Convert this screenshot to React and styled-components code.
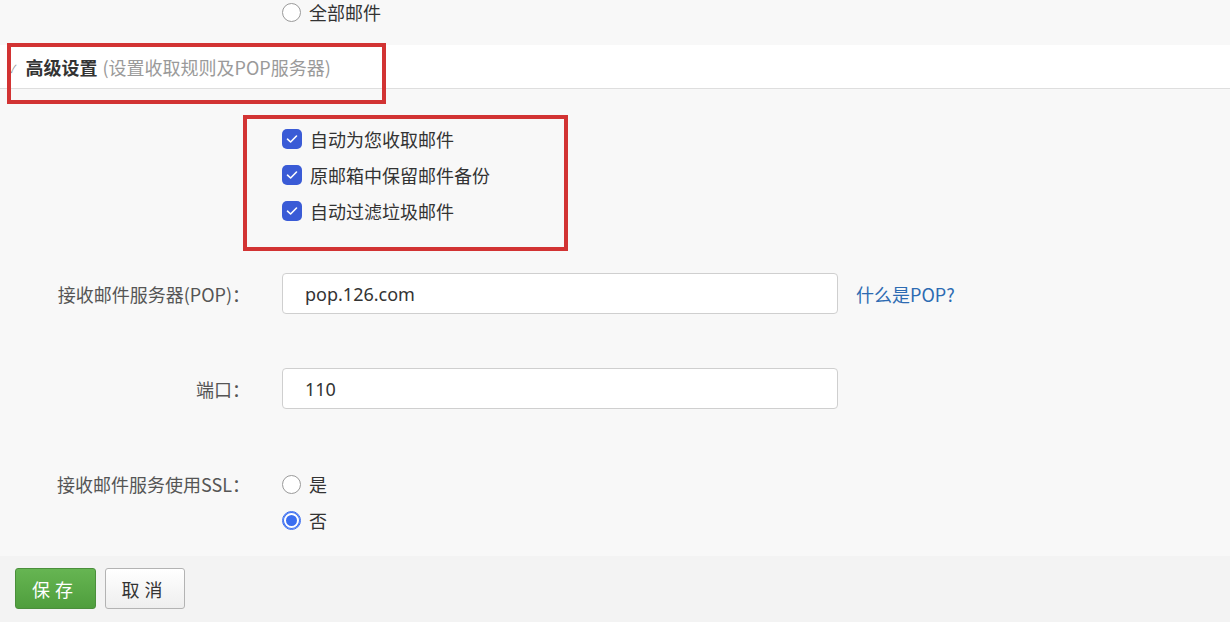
import React from 'react'
import styled, {createGlobalStyle} from 'styled-components'

const GlobalStyle = createGlobalStyle`
    body {
        margin: 0;
        background: #f8f8f8;
        font-family: "Noto Sans CJK SC", "Noto Sans", sans-serif;
        color: #333;
    }
`
const Page = styled.div`
    width: 1230px;
    height: 622px;
    overflow: hidden;
    display: flex;
    flex-direction: column;
`
const TopRow = styled.div`
    height: 24px;
    padding-left: 282px;
    display: flex;
    align-items: center;
`
const Header = styled.div`
    position: relative;
    margin-top: 21px;
    height: 43px;
    background: #fff;
    border-bottom: 1px solid #dedede;
    display: flex;
    align-items: center;
    padding-left: 9px;
`
const Caret = styled.span`
    font-size: 11px;
    color: #999;
    margin-right: 9px;
    margin-top: 2px;
`
const Title = styled.span`
    font-size: 18px;
    font-weight: bold;
    color: #333;
`
const Sub = styled.span`
    font-size: 18px;
    color: #9a9a9a;
    margin-left: 5px;
`
const Mark = styled.div`
    position: absolute;
    left: ${p => p.$left}px;
    top: ${p => p.$top}px;
    width: ${p => p.$w}px;
    height: ${p => p.$h}px;
    border: 4px solid #d23333;
    box-sizing: border-box;
    pointer-events: none;
`
const Checks = styled.div`
    position: relative;
    margin: 32px 0 0 282px;
    display: flex;
    flex-direction: column;
`
const CheckRow = styled.label`
    height: 36px;
    display: flex;
    align-items: center;
    gap: 8px;
    font-size: 18px;
    color: #333;
`
const Box = styled.span`
    width: 20px;
    height: 20px;
    border-radius: 5px;
    background: #3a5bd6;
    display: flex;
    align-items: center;
    justify-content: center;
`
const Field = styled.div`
    display: grid;
    grid-template-columns: 250px 556px auto;
    column-gap: 32px;
    align-items: ${p => (p.$top ? 'start' : 'center')};
    margin-top: ${p => p.$mt}px;
`
const Label = styled.div`
    text-align: right;
    font-size: 18px;
    color: #555;
    line-height: 36px;
`
const Input = styled.input`
    box-sizing: border-box;
    width: 556px;
    height: 41px;
    border: 1px solid #cfcfcf;
    border-radius: 4px;
    background: #fff;
    padding: 0 22px;
    font-family: "Noto Sans", "Noto Sans CJK SC", sans-serif;
    font-size: 18px;
    color: #333;
    outline: none;
`
const Help = styled.a`
    font-size: 18px;
    color: #2d6bb2;
    text-decoration: none;
    margin-left: -14px;
`
const Radios = styled.div`
    display: flex;
    flex-direction: column;
`
const RadioRow = styled.label`
    height: ${p => p.$h || 36}px;
    display: flex;
    align-items: center;
    gap: 8px;
    font-size: 18px;
    line-height: 24px;
    color: #333;
`
const Dot = styled.span`
    box-sizing: border-box;
    width: 19px;
    height: 19px;
    border-radius: 50%;
    background: #fff;
    border: 1px solid ${p => (p.$on ? '#3b6ef0' : '#9a9a9a')};
    box-shadow: ${p => (p.$on ? 'inset 0 0 0 1px #3b6ef0, inset 0 0 0 3px #fff, inset 0 0 0 10px #3b6ef0' : 'none')};
`
const Footer = styled.div`
    margin-top: 18px;
    flex: 1;
    background: #f3f3f3;
    display: flex;
    gap: 9px;
    padding: 12px 0 0 15px;
`
const Button = styled.button`
    width: ${p => p.$w}px;
    height: 41px;
    border-radius: 3px;
    font-family: "Noto Sans CJK SC", sans-serif;
    font-size: 18px;
    letter-spacing: 5px;
    padding-left: 5px;
    cursor: pointer;
    color: ${p => (p.$primary ? '#fff' : '#333')};
    border: 1px solid ${p => (p.$primary ? '#4a8f3b' : '#b3b3b3')};
    background: ${p => (p.$primary ? 'linear-gradient(#66b552, #4f9e3d)' : 'linear-gradient(#ffffff, #eeeeee)')};
`

const CheckIcon = () => (
    <Box>
        <svg width="12" height="10" viewBox="0 0 12 10">
            <path d="M1.5 5.2 L4.6 8 L10.5 2" fill="none" stroke="#fff" strokeWidth="1.6" strokeLinecap="round" strokeLinejoin="round" />
        </svg>
    </Box>
)

export default function App() {
    const checks = ['自动为您收取邮件', '原邮箱中保留邮件备份', '自动过滤垃圾邮件']
    return (
        <Page>
            <GlobalStyle />
            <TopRow>
                <RadioRow $h={24}><Dot /> 全部邮件</RadioRow>
            </TopRow>
            <Header>
                <Caret>✓</Caret>
                <Title>高级设置</Title>
                <Sub>(设置收取规则及POP服务器)</Sub>
                <Mark $left={7} $top={-2} $w={379} $h={61} />
            </Header>
            <Checks>
                {checks.map(c => (
                    <CheckRow key={c}><CheckIcon />{c}</CheckRow>
                ))}
                <Mark $left={-39} $top={-6} $w={325} $h={136} />
            </Checks>
            <Field $mt={44}>
                <Label>接收邮件服务器(POP)：</Label>
                <Input defaultValue="pop.126.com" />
                <Help href="#">什么是POP?</Help>
            </Field>
            <Field $mt={54}>
                <Label>端口：</Label>
                <Input defaultValue="110" />
            </Field>
            <Field $mt={57} $top>
                <Label>接收邮件服务使用SSL：</Label>
                <Radios>
                    <RadioRow><Dot /> 是</RadioRow>
                    <RadioRow><Dot $on /> 否</RadioRow>
                </Radios>
            </Field>
            <Footer>
                <Button $primary $w={81}>保存</Button>
                <Button $w={80}>取消</Button>
            </Footer>
        </Page>
    )
}
